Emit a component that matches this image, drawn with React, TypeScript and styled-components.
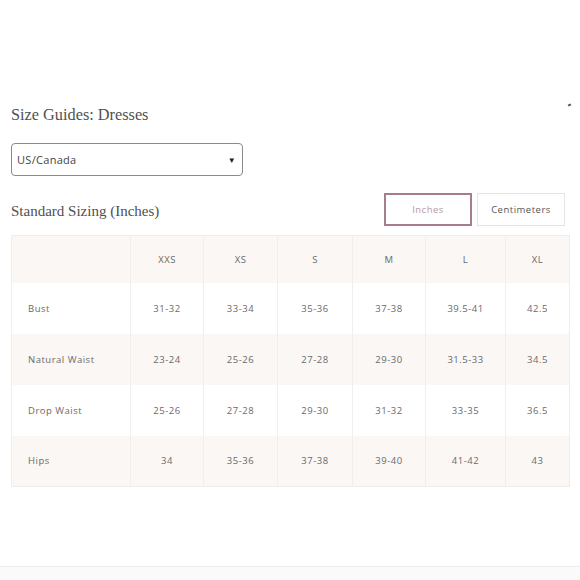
import React from 'react';
import styled, { createGlobalStyle } from 'styled-components';

const GlobalStyle = createGlobalStyle`
  body {
    margin: 0;
    background: #ffffff;
  }
`;

const Page = styled.div`
  width: 580px;
  height: 580px;
  display: flex;
  flex-direction: column;
  background: #ffffff;
`;

const Content = styled.div`
  flex: 1;
  padding: 104px 11px 0 11px;
`;

const TitleRow = styled.div`
  display: flex;
  justify-content: space-between;
  align-items: flex-start;
`;

const Title = styled.h1`
  margin: 0;
  font-family: 'Liberation Serif', serif;
  font-weight: normal;
  font-size: 16.3px;
  line-height: 22px;
  color: #505050;
`;

/** small speck at top right of the guide */
const Speck = styled.span`
  width: 3px;
  height: 2px;
  margin-right: -2px;
  background: #555;
  transform: rotate(-25deg);
`;

const SelectBox = styled.div`
  margin-top: 17px;
  width: 232px;
  height: 33px;
  box-sizing: border-box;
  border: 1px solid #8a8a8a;
  border-radius: 4px;
  display: flex;
  align-items: center;
  justify-content: space-between;
  padding: 0 6px 0 5px;
  font-family: 'Open Sans', sans-serif;
  font-size: 11px;
  letter-spacing: 0.3px;
  color: #444;
`;

const Arrow = styled.span`
  font-size: 8px;
  color: #222;
`;

const Toolbar = styled.div`
  margin-top: 17px;
  height: 33px;
  display: flex;
  align-items: center;
  justify-content: space-between;
  padding-right: 4px;
`;

const SubTitle = styled.h2`
  margin: 3px 0 0 0;
  font-family: 'Liberation Serif', serif;
  font-weight: normal;
  font-size: 15px;
  color: #505050;
`;

const UnitGroup = styled.div`
  display: flex;
  gap: 5px;
`;

const UnitButton = styled.button<{ active?: boolean }>`
  width: 88px;
  height: 33px;
  box-sizing: border-box;
  background: #fff;
  border: ${p => (p.active ? '2px solid #a57d8c' : '1px solid #e6e3e3')};
  font-family: 'Open Sans', sans-serif;
  font-size: 9.5px;
  letter-spacing: 0.5px;
  color: ${p => (p.active ? '#b59aa3' : '#555')};
  padding: 0;
`;

const Table = styled.table`
  margin-top: 9px;
  width: 558px;
  border-collapse: collapse;
  table-layout: fixed;
  border: 1px solid #efeceb;
  font-family: 'Open Sans', sans-serif;
  font-size: 9.5px;
  letter-spacing: 0.5px;
  color: #6a6a6a;
`;

const Row = styled.tr<{ tinted?: boolean; tall?: number }>`
  height: ${p => p.tall || 51}px;
  background: ${p => (p.tinted ? '#fbf7f4' : '#ffffff')};
`;

const Cell = styled.td<{ label?: boolean }>`
  border-left: 1px solid #f1eeec;
  text-align: ${p => (p.label ? 'left' : 'center')};
  padding: 0 0 0 ${p => (p.label ? '16px' : '0')};
`;

const widths = [119, 73, 74, 75, 73, 80, 64];
const sizes = ['XXS', 'XS', 'S', 'M', 'L', 'XL'];
const rows = [
  { name: 'Bust', values: ['31-32', '33-34', '35-36', '37-38', '39.5-41', '42.5'] },
  { name: 'Natural Waist', values: ['23-24', '25-26', '27-28', '29-30', '31.5-33', '34.5'] },
  { name: 'Drop Waist', values: ['25-26', '27-28', '29-30', '31-32', '33-35', '36.5'] },
  { name: 'Hips', values: ['34', '35-36', '37-38', '39-40', '41-42', '43'] },
];

const Footer = styled.div`
  height: 13px;
  border-top: 1px solid #ececec;
  background: #fafafa;
`;

export default function App() {
  return (
    <Page>
      <GlobalStyle />
      <Content>
        <TitleRow>
          <Title>Size Guides: Dresses</Title>
          <Speck />
        </TitleRow>
        <SelectBox>
          <span>US/Canada</span>
          <Arrow>▼</Arrow>
        </SelectBox>
        <Toolbar>
          <SubTitle>Standard Sizing (Inches)</SubTitle>
          <UnitGroup>
            <UnitButton active>Inches</UnitButton>
            <UnitButton>Centimeters</UnitButton>
          </UnitGroup>
        </Toolbar>
        <Table>
          <colgroup>
            {widths.map((w, i) => (
              <col key={i} style={{ width: w }} />
            ))}
          </colgroup>
          <thead>
            <Row tinted tall={47}>
              <Cell label />
              {sizes.map(s => (
                <Cell key={s}>{s}</Cell>
              ))}
            </Row>
          </thead>
          <tbody>
            {rows.map((r, i) => (
              <Row key={r.name} tinted={i % 2 === 1}>
                <Cell label>{r.name}</Cell>
                {r.values.map((v, j) => (
                  <Cell key={j}>{v}</Cell>
                ))}
              </Row>
            ))}
          </tbody>
        </Table>
      </Content>
      <Footer />
    </Page>
  );
}
